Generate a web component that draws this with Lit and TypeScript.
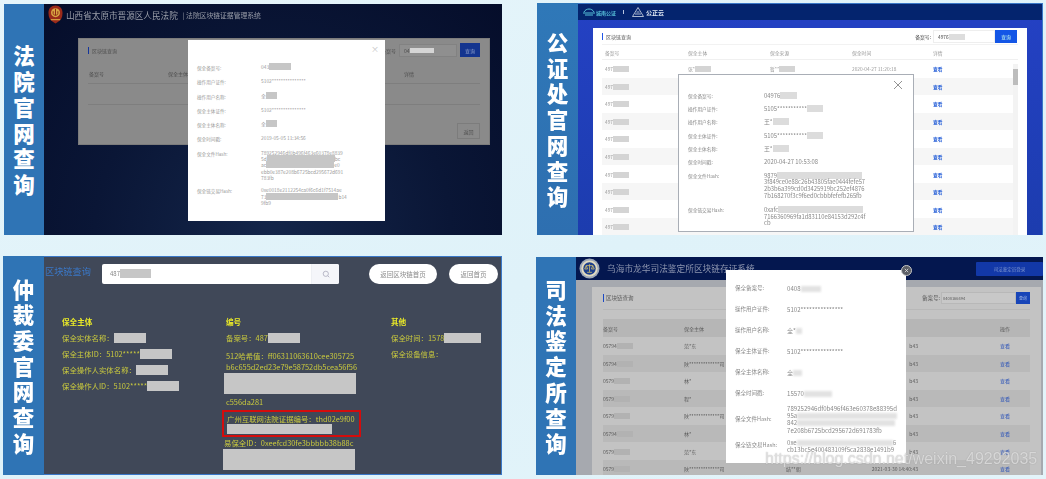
import { LitElement, html, css, svg } from "lit";
import { customElement } from "lit/decorators.js";

const m = (w: number) => html`<i class="mask" style="width:${w}px"></i>`;

type Row = { l: string; v: unknown[] };

const modal1: Row[] = [
  { l: "保全备案号:", v: [html`<div>043${m(22)}</div>`] },
  { l: "操作用户证件:", v: [html`<div>5102***************</div>`] },
  { l: "操作用户名称:", v: [html`<div>全${m(11)}</div>`] },
  { l: "保全主体证件:", v: [html`<div>5102***************</div>`] },
  { l: "保全主体名称:", v: [html`<div>全${m(11)}</div>`] },
  { l: "保全时间戳:", v: [html`<div>2019-05-05 11:34:56</div>`] },
  { l: "保全文件Hash:", v: [
    html`<div>789252946df0b496f463e60378e8839</div>`,
    html`<div>5d${m(68)}bc</div>`,
    html`<div>ac${m(68)}e0</div>`,
    html`<div>ebb0e387e208b6725bcd295672d691</div>`,
    html`<div>783fb</div>`] },
  { l: "保全链交易Hash:", v: [
    html`<div>0xe0018e2112254ca0f6c6d1f7514ae</div>`,
    html`<div>73${m(72)}b14</div>`,
    html`<div>9fb9</div>`] },
];

const modal2: Row[] = [
  { l: "保全备案号:", v: [html`<div>04976${m(17)}</div>`] },
  { l: "操作用户证件:", v: [html`<div>5105***********${m(16)}</div>`] },
  { l: "操作用户名称:", v: [html`<div>王*${m(16)}</div>`] },
  { l: "保全主体证件:", v: [html`<div>5105***********${m(16)}</div>`] },
  { l: "保全主体名称:", v: [html`<div>王*${m(16)}</div>`] },
  { l: "保全时间戳:", v: [html`<div>2020-04-27 10:53:08</div>`] },
  { l: "保全文件Hash:", v: [
    html`<div>9879${m(85)}</div>`,
    html`<div>3f849ce0e88c26b43805fae0444fefe57</div>`,
    html`<div>2b3b6a399cd0d3425919bc252ef4876</div>`,
    html`<div>7b168270f3c9f6ed0cbbbfefefb265fb</div>`] },
  { l: "保全链交易Hash:", v: [
    html`<div>0xafc${m(85)}</div>`,
    html`<div>7166360969fa1d83110e84153d292c4f</div>`,
    html`<div>cb</div>`] },
];

const modal4: Row[] = [
  { l: "保全备案号:", v: [html`<div>0408${m(20)}</div>`] },
  { l: "操作用户证件:", v: [html`<div>5102***************</div>`] },
  { l: "操作用户名称:", v: [html`<div>全*${m(6)}</div>`] },
  { l: "保全主体证件:", v: [html`<div>5102***************</div>`] },
  { l: "保全主体名称:", v: [html`<div>全${m(9)}</div>`] },
  { l: "保全时间戳:", v: [html`<div>15570${m(28)}</div>`] },
  { l: "保全文件Hash:", v: [
    html`<div>789252946df0b496f463e60378e88395d</div>`,
    html`<div>95a${m(100)}</div>`,
    html`<div>842${m(98)}</div>`,
    html`<div>7e208b6725bcd295672d691783fb</div>`] },
  { l: "保全链交易Hash:", v: [
    html`<div>0xe${m(96)}6</div>`,
    html`<div>cb13bc5e400483109f5ca2838e1491b9</div>`] },
];

const modalRows = (rows: Row[]) => rows.map(
  (r) => html`<div class="m-row"><span class="m-l">${r.l}</span><div class="m-v">${r.v}</div></div>`
);

const courtEmblem = svg`
  <svg class="emblem" viewBox="0 0 16 20">
    <path d="M8 0.5c4.5 0 7.5 3 7.5 8s-2 8-5 9.5l-2.500 1.500l-2.500-1.500c-3-1.500-5-4.500-5-9.500s3-8 7.500-8z" fill="#9a2a1a"/>
    <circle cx="8" cy="8" r="4.800" fill="#d9a441"/>
    <path d="M8 4v7M5.500 6.500v2.500c0 1 1 1.800 2.500 1.800s2.500-.8 2.500-1.800V6.500" stroke="#8a2316" stroke-width="1" fill="none"/>
    <path d="M3 15.500h10" stroke="#d9a441" stroke-width="1.200"/>
  </svg>`;

const justiceBadge = svg`
  <svg class="badge" viewBox="0 0 22 22">
    <circle cx="11" cy="11" r="10.500" fill="#9ea8b8"/>
    <circle cx="11" cy="11" r="8.500" fill="#e3dcc0"/>
    <circle cx="11" cy="11" r="6.500" fill="#1d3f8c"/>
    <path d="M11 6.500v8M7.500 8h7M7.500 8l-1.500 3.500h3zM14.500 8l-1.500 3.500h3zM8.500 15h5" stroke="#d8c26a" stroke-width=".8" fill="none"/>
  </svg>`;

@customElement("app-root")
export class AppRoot extends LitElement {
  static styles = css`
    :host { display: block; width: 1046px; height: 479px; overflow: hidden; }
  `;
  render() { return html`<evidence-board></evidence-board>`; }
}

@customElement("evidence-board")
export class EvidenceBoard extends LitElement {
  static styles = css`
    :host {
      display: block;
      width: 1046px;
      height: 479px;
      box-sizing: border-box;
      background: linear-gradient(160deg, #e6f5fa 0%, #dff2f9 55%, #e3f4fa 100%);
      font-family: "Noto Sans CJK SC", "Liberation Sans", sans-serif;
      color: #888;
    }
    .grid {
      display: grid;
      grid-template-columns: 499px 507px;
      grid-template-rows: 232px 219px;
      column-gap: 34px;
      row-gap: 21px;
      padding: 3px 3px 0 3px;
    }
    .panel { display: flex; position: relative; overflow: hidden; min-width: 0; filter: blur(0.35px); }
    .side {
      flex: 0 0 41px;
      background: #2f74b5;
      color: #fff;
      display: flex;
      flex-direction: column;
      align-items: center;
      justify-content: center;
      font-size: 21.500px;
      line-height: 25.700px;
      font-weight: 900;
    }
    .main { flex: 1; min-width: 0; position: relative; overflow: hidden; }
    .mask { display: inline-block; height: 7px; margin: -2px 0; background: #c4c4c4; vertical-align: 1px; }

    .modal { position: absolute; background: #fff; box-sizing: border-box; }
    .m-row { display: flex; }
    .m-l { flex: none; }
    .m-v div { white-space: nowrap; }

    /* panel 1 */
    .p1 { margin: 1px 0 0 1px; }
    .p1 .side { flex-basis: 40px; }
    .p1 .main { background: radial-gradient(ellipse at 50% 100%, #14264a 0%, #0a1636 55%, #050d2a 100%); }
    .p1 .head { display: flex; align-items: center; height: 21px; box-sizing: border-box; padding-left: 4px; gap: 3px; color: #9a9ea9; }
    .emblem { width: 15px; height: 19px; flex: none; }
    .p1 .org { font-size: 8.600px; white-space: nowrap; }
    .p1 .sys { font-size: 6.800px; white-space: nowrap; margin-left: 2px; }
    .p1 .card {
      margin: 13px 12px 0 34px;
      height: 107px;
      background: #8a8a8a;
      box-sizing: border-box;
      padding: 4px 9px 0 9px;
      color: #4e4e4e;
      font-size: 5px;
      border: 1px solid #7c7c7c;
    }
    .c-top { display: flex; align-items: center; }
    .c-title { border-left: 1.500px solid #14359c; padding-left: 3px; }
    .c-search { margin-left: auto; display: flex; align-items: center; gap: 3px; }
    .p1 .c-top { height: 14px; }
    .p1 .input { width: 58px; height: 13px; background: #8f8f8f; border: 1px solid #828282; box-sizing: border-box; padding-left: 4px; display: flex; align-items: center; }
    .p1 .input .mask { height: 5px; margin: 0; background: #d5d5d5; }
    .p1 .btn { width: 20px; height: 14px; background: #14358f; color: #8fa0cc; display: flex; align-items: center; justify-content: center; }
    .p1 .thead { display: grid; grid-template-columns: 79px 236px 1fr; height: 19px; align-items: center; padding: 3px 1px 0 1px; margin-top: 4px; border-bottom: 1px solid #7e7e7e; }
    .p1 .tbody { height: 20px; border-bottom: 1px solid #7e7e7e; }
    .p1 .back { margin: 18px 0 0 auto; width: 21px; height: 14px; border: 1px solid #7c7c7c; display: flex; align-items: center; justify-content: center; }
    .p1 .modal { left: 144px; top: 36px; width: 197px; height: 181px; padding: 24px 9px 0 9px; font-size: 4.850px; color: #9a9a9a; }
    .p1 .m-row { margin-bottom: 7.950px; line-height: 6.350px; }
    .p1 .m-row:last-child { margin-top: -2px; }
    .p1 .m-l { width: 64px; padding-top: 1px; margin-bottom: -1px; font-size: 4.600px; }
    .p1 .m-v .mask { background: #c6c6c6; }
    .x1 { position: absolute; right: 6px; top: 5px; color: #c4c4c4; font-size: 8px; line-height: 8px; }

    /* panel 2 */
    .p2 .side { flex-basis: 41px; background: linear-gradient(#2f78b8, #2e6fb0); }
    .p2 { margin-left: 1px; }
    .p2 .main { background: linear-gradient(#2441c4, #1c3cae); border-top: 1px solid #3a78c8; border-right: 1px solid #3a78c8; }
    .p2 .head { height: 16px; background: #04246e; display: flex; align-items: center; padding-left: 5px; color: #e4ecf6; gap: 5px; font-size: 6px; font-weight: 700; }
    .logo-a { display: flex; align-items: center; gap: 1px; color: #57c0d8; font-size: 5px; }
    .sep { width: 1px; height: 4px; background: #b9c6e0; margin: 0 3px 0 2px; }
    .logo-b { display: flex; align-items: center; gap: 2px; }
    .p2 .card { margin: 8px 15px 0 15px; height: 210px; background: #fff; padding: 2px 9px 0 9px; box-sizing: border-box; font-size: 4.800px; color: #999; }
    .p2 .c-top { height: 13px; }
    .p2 .c-title { color: #555; font-size: 5px; border-left-color: #2056e8; }
    .p2 .input { width: 62px; height: 13px; border: 1px solid #eee; box-sizing: border-box; display: flex; align-items: center; padding-left: 4px; }
    .p2 .input .mask { height: 6px; margin: 0; background: #ddd; }
    .p2 .btn { width: 22px; height: 13px; background: #1456e6; color: #cfe; display: flex; align-items: center; justify-content: center; }
    .p2 .c-search { gap: 2px; color: #444; margin-right: 1px; }
    .p2 .c-search .group { display: flex; }
    .p2 .thead, .p2 .row { display: grid; grid-template-columns: 83px 82px 82px 81px 1fr; align-items: center; padding-left: 3px; }
    .p2 .thead { height: 16px; margin-top: 1px; border-top: 1px solid #f2f2f2; border-bottom: 1px solid #f0f0f0; box-sizing: border-box; }
    .p2 .row { height: 17.550px; box-sizing: border-box; }
    .p2 .row:nth-child(even) { background: #f6f6f6; }
    .p2 .row .mask { background: #d4d4d4; height: 6px; }
    .p2 .see { color: #2a62d8; font-weight: 700; }
    .p2 .scroll { position: absolute; left: 435px; top: 60px; width: 5px; height: 172px; background: #f3f3f3; }
    .p2 .thumb { width: 5px; height: 16px; margin-top: 5px; background: #bdbdbd; }
    .p2 .modal { left: 100px; top: 70px; width: 236px; height: 158px; border: 1px solid #a9aeb6; padding: 17.500px 9px 0 9px; font-size: 5.850px; color: #888; }
    .p2 .m-row { margin-bottom: 6.450px; line-height: 6.900px; }
    .p2 .m-l { width: 76px; font-size: 4.700px; }
    .p2 .m-v .mask { background: #dcdcdc; }
    .x2 { position: absolute; right: 10px; top: 5px; width: 10px; height: 10px; }

    /* panel 3 */
    .p3 .main { background: #404858; border: 1px solid #3a78c8; border-left: 0; box-sizing: border-box; font-size: 7.400px; color: #c9c93e; }
    .p3 .top { display: flex; align-items: center; height: 19px; margin-top: 7px; }
    .p3 .h { color: #3a78c8; font-size: 9.200px; width: 57px; margin-left: 1px; margin-top: -6px; flex: none; }
    .p3 .search { width: 237px; height: 20px; background: #fff; border-radius: 2px; display: flex; color: #888; font-size: 6px; align-items: stretch; overflow: hidden; }
    .p3 .search .txt { flex: 1; padding-left: 8px; display: flex; align-items: center; }
    .p3 .search .mask { height: 9px; margin: 0; background: #c6c6c6; }
    .p3 .search .ico { width: 27px; background: #f5f6fa; display: flex; align-items: center; justify-content: center; border-left: 1px solid #eef0f4; }
    .p3 .pill { height: 20px; background: #fff; border-radius: 10px; color: #8a8a8a; font-size: 6.500px; display: flex; align-items: center; justify-content: center; }
    .p3 .p-a { width: 68px; margin-left: 30px; }
    .p3 .p-b { width: 49px; margin-left: 12px; }
    .p3 .cols { display: grid; grid-template-columns: 164px 165px 1fr; padding-left: 18px; margin-top: 33px; }
    .p3 .t { font-weight: 700; color: #e8e828; font-size: 7.600px; line-height: 12px; margin-bottom: 3.500px; }
    .p3 .f { line-height: 12px; margin-bottom: 4px; white-space: nowrap; height: 12px; }
    .p3 .f.wide { margin-bottom: 6px; }
    .p3 .mask { height: 9.500px; margin: 0; vertical-align: -2px; background: #c6c6c6; }
    .p3 .long { display: block; height: 21px; width: 132px; margin: 1px 0 2px -2px; }
    .p3 .long.low { margin: 0 0 0 -3px; }
    .p3 .f2 { line-height: 11.400px; white-space: nowrap; }
    .p3 .f2.in { margin-left: -2px; }
    .p3 .red { margin: 2px 0 0.500px -4px; width: 139px; height: 27px; border: 2px solid #d40c0c; box-sizing: border-box; padding: 1px 0 0 3px; line-height: 11px; white-space: nowrap; }
    .p3 .red .mask { display: block; height: 10px; width: 105px; }

    /* panel 4 */
    .p4 { margin-top: 1px; }
    .p4 .side { flex-basis: 40px; }
    .p4 .main { background: #a6a9af; }
    .p4 .head { height: 23px; background: #04174f; display: flex; align-items: center; padding-left: 3px; color: #8f97b0; }
    .badge { width: 21px; height: 21px; flex: none; }
    .p4 .org { font-size: 8.700px; margin-left: 7px; white-space: nowrap; }
    .p4 .hbtn { margin-left: auto; width: 67px; height: 14px; background: #1238a8; color: #7f97d0; border-radius: 1px; font-size: 4.500px; display: flex; align-items: center; justify-content: center; }
    .p4 .card { margin: 7px 2px 0 16px; height: 188px; background: #c3c3c3; padding: 0 11px; box-sizing: border-box; font-size: 5px; color: #5c5c5c; }
    .p4 .c-top { height: 22px; border-bottom: 1px solid #b8b8b8; }
    .p4 .c-title { font-size: 5.500px; border-left: 1.500px solid #1c49c4; padding-left: 2px; }
    .p4 .input { width: 75px; height: 12px; background: #c8c8c8; border: 1px solid #b8b8b8; box-sizing: border-box; font-size: 4px; display: flex; align-items: center; padding-left: 1px; }
    .p4 .btn { width: 14px; height: 12px; background: #1845b8; color: #a9bde8; font-size: 4px; display: flex; align-items: center; justify-content: center; }
    .p4 .c-search { gap: 1px; }
    .p4 .c-search .lbl { font-size: 5.500px; }
    .p4 .c-search .group { display: flex; }
    .p4 .thead, .p4 .row { display: grid; grid-template-columns: 81px 102px 80px 52px 82px 1fr; align-items: center; }
    .p4 .thead { height: 18px; margin-top: 9px; background: #b6b6b6; }
    .p4 .row { height: 17.550px; box-sizing: border-box; }
    .p4 .row:nth-child(even) { background: #b9b9b9; }
    .p4 .row .mask { height: 6px; background: #b2b2b2; }
    .p4 .tail { text-align: right; white-space: nowrap; }
    .p4 .see { color: #2a52b8; }
    .p4 .modal { left: 150px; top: 13px; width: 180px; height: 193px; padding: 15px 9px 0 9px; font-size: 6.100px; color: #888; }
    .p4 .m-row { align-items: center; margin-bottom: 13.800px; line-height: 7.200px; }
    .p4 .m-row.hash { margin-bottom: 5px; }
    .p4 .m-row.hash.first { margin-top: -6px; }
    .p4 .m-l { width: 52px; font-size: 5.500px; }
    .p4 .m-v .mask { background: #e2e2e2; height: 6px; filter: blur(1px); }
    .x4 { position: absolute; left: 325px; top: 8px; width: 11px; height: 11px; border-radius: 50%; background: #5c5f66; border: 1px solid #c8c8c8; box-sizing: border-box; display: flex; align-items: center; justify-content: center; }
    .wm { position: absolute; left: 189px; top: 192px; font: 400 16px "Liberation Sans", sans-serif; color: rgba(255,255,255,.62); text-shadow: 0 0 1px rgba(120,120,120,.7); white-space: nowrap; line-height: 20px; }
  `;

  side(chars: string) {
    return html`<div class="side">${[...chars].map((c) => html`<span>${c}</span>`)}</div>`;
  }

  render() {
    return html`<div class="grid">
      ${this.panel1()}${this.panel2()}${this.panel3()}${this.panel4()}
    </div>`;
  }

  panel1() {
    return html`<section class="panel p1">
      ${this.side("法院官网查询")}
      <div class="main">
        <div class="head">${courtEmblem}<span class="org">山西省太原市晋源区人民法院</span><span class="sys">| 法院区块链证据管理系统</span></div>
        <div class="card">
          <div class="c-top"><span class="c-title">区块链查询</span>
            <div class="c-search"><span>备案号</span><div class="input">04${m(24)}</div><div class="btn">查询</div></div></div>
          <div class="thead"><span>备案号</span><span>保全主体</span><span>详情</span></div>
          <div class="tbody"></div>
          <div class="back">返回</div>
        </div>
        <div class="modal"><span class="x1">×</span>${modalRows(modal1)}</div>
      </div>
    </section>`;
  }

  panel2() {
    const rows = Array.from({ length: 10 }, (_, i) => i);
    return html`<section class="panel p2">
      ${this.side("公证处官网查询")}
      <div class="main">
        <div class="head">
          <span class="logo-a"><svg width="12" height="8" viewBox="0 0 12 8"><path d="M1 4c2-4 8-4 10 0M0 5h12M2 7h8" stroke="#57c0d8" fill="none" stroke-width="1"/></svg>城南公证</span>
          <i class="sep"></i>
          <span class="logo-b"><svg width="12" height="10" viewBox="0 0 12 10"><path d="M6 .5L11.500 9.500H.5zM3 7h6M4.500 5h3" stroke="#d6deea" fill="none" stroke-width=".8"/></svg>公正云</span>
        </div>
        <div class="card">
          <div class="c-top"><span class="c-title">区块链查询</span>
            <div class="c-search"><span>备案号:</span><div class="group"><div class="input">4976${m(16)}</div><div class="btn">查询</div></div></div></div>
          <div class="thead"><span>备案号</span><span>保全主体</span><span>保全来源</span><span>保全时间</span><span>详情</span></div>
          <div>${rows.map((i) => html`<div class="row"><span>497${m(16)}</span>
            <span>${i === 0 ? html`张*${m(16)}` : ""}</span><span>${i === 0 ? html`暂**${m(16)}` : ""}</span>
            <span>${i === 0 ? "2020-04-27 11:20:18" : ""}</span><span class="see">查看</span></div>`)}</div>
        </div>
        <div class="scroll"><div class="thumb"></div></div>
        <div class="modal">
          <svg class="x2" viewBox="0 0 10 10"><path d="M1 1l8 8M9 1l-8 8" stroke="#777" stroke-width=".8"/></svg>
          ${modalRows(modal2)}
        </div>
      </div>
    </section>`;
  }

  panel3() {
    return html`<section class="panel p3">
      ${this.side("仲裁委官网查询")}
      <div class="main">
        <div class="top">
          <span class="h">区块链查询</span>
          <div class="search"><div class="txt">487${m(31)}</div>
            <div class="ico"><svg width="8" height="8" viewBox="0 0 8 8"><circle cx="3.800" cy="3.800" r="2.600" fill="none" stroke="#aab" stroke-width=".8"/><path d="M5.800 5.800l1.500 1.500" stroke="#aab" stroke-width=".8"/></svg></div></div>
          <div class="pill p-a">返回区块链首页</div>
          <div class="pill p-b">返回首页</div>
        </div>
        <div class="cols">
          <div>
            <div class="t">保全主体</div>
            <div class="f">保全实体名称：${m(32)}</div>
            <div class="f">保全主体ID：5102*****${m(32)}</div>
            <div class="f">保全操作人实体名称：${m(32)}</div>
            <div class="f">保全操作人ID：5102*****${m(32)}</div>
          </div>
          <div>
            <div class="t">编号</div>
            <div class="f wide">备案号：487${m(32)}</div>
            <div class="f2">512哈希值：ff06311063610cee305725</div>
            <div class="f2">b6c655d2ed23e79e58752db5cea56f56</div>
            <i class="mask long"></i>
            <div class="f2">c556da281</div>
            <div class="red">广州互联网法院证据编号：thd02e9f00<i class="mask"></i></div>
            <div class="f2 in">易保全ID：0xeefcd30fe3bbbbb38b88c</div>
            <i class="mask long low"></i>
          </div>
          <div>
            <div class="t">其他</div>
            <div class="f">保全时间：1578${m(37)}</div>
            <div class="f">保全设备信息：</div>
          </div>
        </div>
      </div>
    </section>`;
  }

  panel4() {
    const ids = [["05794", "范*东"], ["05794", "陕*************司"], ["0579", "林*"], ["0579", "程*"], ["0579", "陕*************司"], ["05794", "林*"], ["0579", "范*东"], ["0579", "陕*************司"]];
    return html`<section class="panel p4">
      ${this.side("司法鉴定所查询")}
      <div class="main">
        <div class="head">${justiceBadge}<span class="org">乌海市龙华司法鉴定所区块链存证系统</span><div class="hbtn">司法鉴定员登录</div></div>
        <div class="card">
          <div class="c-top"><span class="c-title">区块链查询</span>
            <div class="c-search"><span class="lbl">备案号:</span><div class="group"><div class="input">0408166494</div><div class="btn">查询</div></div></div></div>
          <div class="thead"><span>备案号</span><span>保全主体</span><span></span><span></span><span></span><span>操作</span></div>
          <div>${ids.map(([a, b], i) => html`<div class="row"><span>${a}${m(16)}</span><span>${b}</span>
            <span>${i === 7 ? "结**朝" : ""}</span>
            <span class="tail">${i === 7 ? "2021-03-30 14:40:43" : "b43"}</span><span></span>
            <span class="see">查看</span></div>`)}</div>
        </div>
        <div class="modal">${modalRows(modal4.slice(0, 6))}
          ${modal4.slice(6).map((r, i) => html`<div class="m-row hash ${i === 0 ? "first" : ""}"><span class="m-l">${r.l}</span><div class="m-v">${r.v}</div></div>`)}
        </div>
        <div class="x4"><svg width="5" height="5" viewBox="0 0 5 5"><path d="M.8.8l3.400 3.400M4.200.8L.8 4.200" stroke="#e4e4e4" stroke-width=".8"/></svg></div>
        <div class="wm">https://blog.csdn.net/weixin_49292035</div>
      </div>
    </section>`;
  }
}
